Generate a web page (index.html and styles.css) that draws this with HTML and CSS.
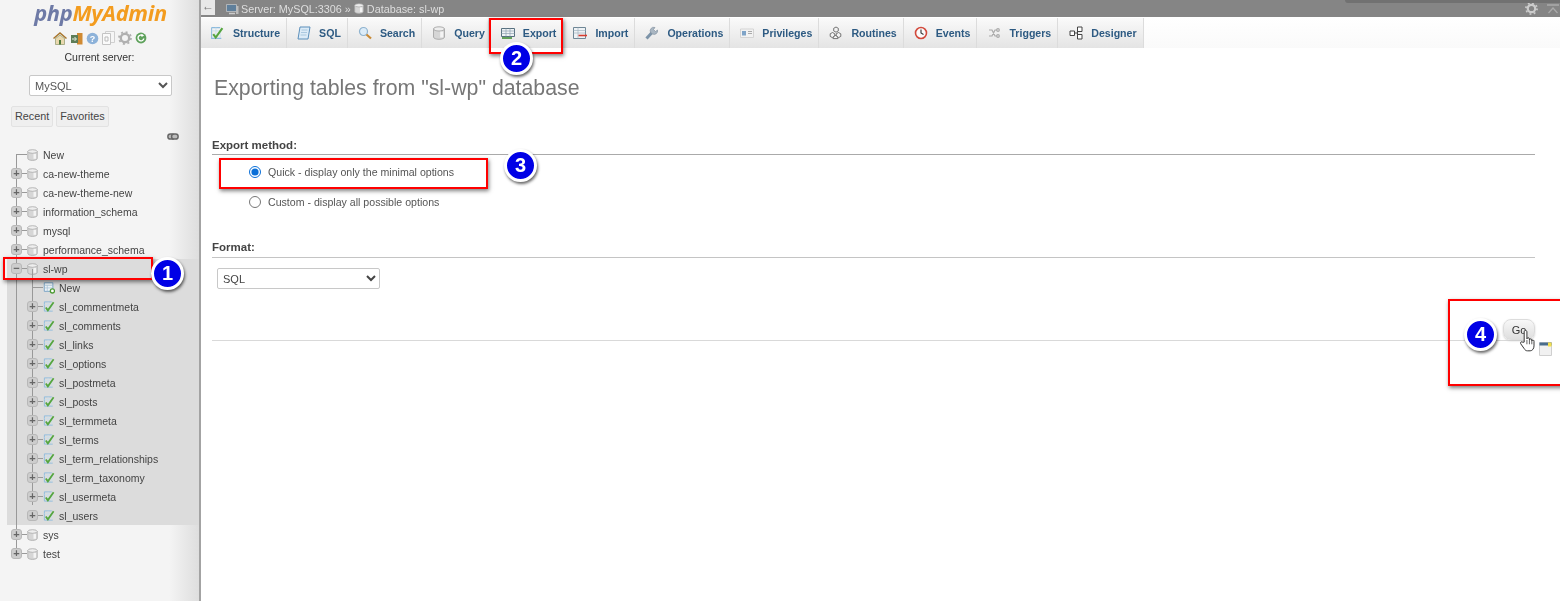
FILE: index.html
```html
<!DOCTYPE html>
<html lang="en">
<head>
    <meta charset="UTF-8">
    <title>phpMyAdmin - Export</title>
    <link rel="stylesheet" href="styles.css">
</head>
<body>
    <svg class="sprites" width="0" height="0">
        <symbol id="db" viewBox="0 0 11 12">
            <path d="M.8 2.500v7c0 1 2.100 1.900 4.700 1.900s4.700-.9 4.700-1.900v-7z" fill="#d6d6d6" stroke="#a8a8a8" stroke-width=".8"/>
            <ellipse cx="5.500" cy="2.500" rx="4.700" ry="1.800" fill="#eee" stroke="#a8a8a8" stroke-width=".8"/>
            <rect x="6.500" y="4.800" width="2.600" height="5" fill="#f4f4f4"/>
        </symbol>
        <symbol id="table" viewBox="0 0 13 13">
            <path d="M1.500 1.500h8M1.500 1.500v10h9" fill="none" stroke="#8dbbdd" stroke-width="1"/>
            <path d="M1.500 4.500h9M5.500 1.500v10M9.500 5v6" stroke="#c8deec" stroke-width=".8"/>
            <path d="M3 7.500l2.300 3.200L11.500 2" fill="none" stroke="#55a53f" stroke-width="1.900"/>
        </symbol>
        <symbol id="table-new" viewBox="0 0 14 14">
            <path d="M1.500 1.500h10v10h-10z" fill="#edf3f8" stroke="#6e9cc0"/>
            <path d="M1.500 4.500h10M1.500 7.500h10M5 4.500v7" stroke="#a4bfd4" stroke-width=".8"/>
            <circle cx="11" cy="11" r="2.400" fill="#fff" stroke="#4b9a32" stroke-width="1.500"/>
        </symbol>
        <symbol id="export" viewBox="0 0 14 14">
            <path d="M.5 2.500h13v8H.5z" fill="#eef2f5" stroke="#57707f"/>
            <path d="M.5 5h13M.5 7.500h13M5 2.500v8M9 2.500v8" stroke="#8fa4b1" stroke-width=".7"/>
            <path d="M1 12h10" stroke="#3f8f35" stroke-width="1.600"/>
        </symbol>
        <symbol id="import" viewBox="0 0 14 14">
            <path d="M.5 1.500h12v11H.5z" fill="#eef2f5" stroke="#6f8796"/>
            <path d="M.5 4.500h12M.5 7h12M5 1.500v11" stroke="#a4b6c1" stroke-width=".7"/>
            <path d="M14 9.500H5.500" stroke="#d63b2e" stroke-width="1.600"/>
        </symbol>
    </svg>

    <div class="app">
        <aside class="sidebar">
            <div class="logo"><span class="logo-php">php</span><span class="logo-admin">MyAdmin</span></div>
            <div class="quick-icons">
                <svg width="14" height="13" viewBox="0 0 14 13"><path d="M.5 6.500L7 1l6.500 5.500" fill="none" stroke="#a8752c" stroke-width="1.500"/><path d="M2.500 6.500v6h9v-6L7 3z" fill="#e9d8ae" stroke="#7c8a5a" stroke-width=".6"/><path d="M6 8h2v4.500H6z" fill="#4e7a3c"/></svg>
                <svg width="13" height="13" viewBox="0 0 13 13"><path d="M7 1h5.500v11.500H7z" fill="#d08a32"/><path d="M1 3h7v8H1z" fill="#5d7d57"/><path d="M2 7h4M4.500 5l2 2-2 2" fill="none" stroke="#e6efe2" stroke-width="1"/></svg>
                <svg width="13" height="13" viewBox="0 0 13 13"><circle cx="6.500" cy="6.500" r="5.800" fill="#8db2d9"/><text class="help-mark" x="6.500" y="9.500" text-anchor="middle">?</text></svg>
                <svg width="13" height="14" viewBox="0 0 13 14"><path d="M3.500.5h9v11h-9z" fill="#f6f6f6" stroke="#d0d0d0"/><path d="M.5 2.500h8v11h-8z" fill="#fafafa" stroke="#c4c4c4"/><path d="M3 6h3v4H3z" fill="none" stroke="#bbb"/></svg>
                <svg width="14" height="14" viewBox="0 0 14 14"><circle cx="7" cy="7" r="4.200" fill="none" stroke="#b0b0b0" stroke-width="2.400"/><circle cx="7" cy="7" r="6" fill="none" stroke="#b0b0b0" stroke-width="1.800" stroke-dasharray="2 2.700"/></svg>
                <svg width="12" height="12" viewBox="0 0 12 12"><circle cx="6" cy="6" r="5.400" fill="#5fa25c"/><path d="M8.800 6.500A2.900 2.900 0 1 1 7.600 3.600" fill="none" stroke="#fff" stroke-width="1.400"/><path d="M6.500 1.800l2.600 1.800-2.600 1.500z" fill="#fff"/></svg>
            </div>
            <div class="server-label">Current server:</div>
            <select class="server-select"><option>MySQL</option></select>
            <div class="side-tabs">
                <span class="side-tab">Recent</span>
                <span class="side-tab">Favorites</span>
            </div>
            <div class="link-row">
                <svg width="12" height="7" viewBox="0 0 12 7"><rect x=".9" y=".9" width="6.500" height="5.200" rx="2.400" fill="#bbb" stroke="#666" stroke-width="1.500"/><rect x="4.600" y=".9" width="6.500" height="5.200" rx="2.400" fill="#bbb" stroke="#666" stroke-width="1.500"/></svg>
            </div>

            <div class="tree">
                <div class="row"><span class="twig twig-new"></span><svg class="ico-db"><use href="#db"/></svg><span>New</span></div>
                <div class="row"><span class="exp">+</span><span class="twig"></span><svg class="ico-db"><use href="#db"/></svg><span>ca-new-theme</span></div>
                <div class="row"><span class="exp">+</span><span class="twig"></span><svg class="ico-db"><use href="#db"/></svg><span>ca-new-theme-new</span></div>
                <div class="row"><span class="exp">+</span><span class="twig"></span><svg class="ico-db"><use href="#db"/></svg><span>information_schema</span></div>
                <div class="row"><span class="exp">+</span><span class="twig"></span><svg class="ico-db"><use href="#db"/></svg><span>mysql</span></div>
                <div class="row"><span class="exp">+</span><span class="twig"></span><svg class="ico-db"><use href="#db"/></svg><span>performance_schema</span></div>

                <div class="open-group">
                    <div class="row row-open"><span class="exp">&minus;</span><span class="twig"></span><svg class="ico-db"><use href="#db"/></svg><span>sl-wp</span></div>
                    <div class="row row-table"><span class="twig twig-new"></span><svg class="ico-table"><use href="#table-new"/></svg><span>New</span></div>
                    <div class="row row-table"><span class="exp">+</span><span class="twig"></span><svg class="ico-table"><use href="#table"/></svg><span>sl_commentmeta</span></div>
                    <div class="row row-table"><span class="exp">+</span><span class="twig"></span><svg class="ico-table"><use href="#table"/></svg><span>sl_comments</span></div>
                    <div class="row row-table"><span class="exp">+</span><span class="twig"></span><svg class="ico-table"><use href="#table"/></svg><span>sl_links</span></div>
                    <div class="row row-table"><span class="exp">+</span><span class="twig"></span><svg class="ico-table"><use href="#table"/></svg><span>sl_options</span></div>
                    <div class="row row-table"><span class="exp">+</span><span class="twig"></span><svg class="ico-table"><use href="#table"/></svg><span>sl_postmeta</span></div>
                    <div class="row row-table"><span class="exp">+</span><span class="twig"></span><svg class="ico-table"><use href="#table"/></svg><span>sl_posts</span></div>
                    <div class="row row-table"><span class="exp">+</span><span class="twig"></span><svg class="ico-table"><use href="#table"/></svg><span>sl_termmeta</span></div>
                    <div class="row row-table"><span class="exp">+</span><span class="twig"></span><svg class="ico-table"><use href="#table"/></svg><span>sl_terms</span></div>
                    <div class="row row-table"><span class="exp">+</span><span class="twig"></span><svg class="ico-table"><use href="#table"/></svg><span>sl_term_relationships</span></div>
                    <div class="row row-table"><span class="exp">+</span><span class="twig"></span><svg class="ico-table"><use href="#table"/></svg><span>sl_term_taxonomy</span></div>
                    <div class="row row-table"><span class="exp">+</span><span class="twig"></span><svg class="ico-table"><use href="#table"/></svg><span>sl_usermeta</span></div>
                    <div class="row row-table"><span class="exp">+</span><span class="twig"></span><svg class="ico-table"><use href="#table"/></svg><span>sl_users</span></div>
                </div>

                <div class="row"><span class="exp">+</span><span class="twig"></span><svg class="ico-db"><use href="#db"/></svg><span>sys</span></div>
                <div class="row"><span class="exp">+</span><span class="twig"></span><svg class="ico-db"><use href="#db"/></svg><span>test</span></div>
            </div>
        </aside>

        <main class="main">
            <div class="topbar">
                <span class="back">&larr;</span>
                <svg class="crumb-icon" width="13" height="12" viewBox="0 0 13 12"><path d="M.5 1.500h10v7H.5z" fill="#5f7f9b" stroke="#ccc" stroke-width=".7"/><path d="M3 10.500h6" stroke="#ccc" stroke-width="1.500"/><path d="M10 3h2.500v8H10z" fill="#bbb"/></svg>
                <span class="crumb">Server: MySQL:3306</span>
                <span class="crumb crumb-sep">&raquo;</span>
                <svg class="crumb-db"><use href="#db"/></svg>
                <span class="crumb">Database: sl-wp</span>
                <div class="topbar-right">
                    <svg width="13" height="13" viewBox="0 0 14 14"><circle cx="7" cy="7" r="4" fill="none" stroke="#ccc" stroke-width="2.400"/><circle cx="7" cy="7" r="6" fill="none" stroke="#ccc" stroke-width="1.800" stroke-dasharray="2 2.700"/></svg>
                    <svg width="12" height="10" viewBox="0 0 12 10"><path d="M0 1h12M1.500 9L6 4l4.500 5" fill="none" stroke="#aaa" stroke-width="1.300"/></svg>
                </div>
            </div>

            <nav class="tabs">
                <a class="tab tab-first"><svg class="tab-icon"><use href="#table"/></svg>Structure</a>
                <a class="tab"><svg class="tab-icon" viewBox="0 0 14 14"><path d="M3 1h10l-2 12H1z" fill="#dcebf7" stroke="#5b8fbb"/><path d="M4.500 4h6M4 6.500h6M3.500 9h6" stroke="#9dbfd9" stroke-width=".8"/></svg>SQL</a>
                <a class="tab"><svg class="tab-icon" viewBox="0 0 14 14"><circle cx="5.500" cy="5.500" r="4" fill="#dcecf8" stroke="#8fb3cf" stroke-width="1.200"/><path d="M8.500 8.500l4.500 4" stroke="#c98a35" stroke-width="2.200"/></svg>Search</a>
                <a class="tab tab-query"><svg class="tab-icon"><use href="#db"/></svg>Query</a>
                <a class="tab tab-export"><svg class="tab-icon"><use href="#export"/></svg>Export</a>
                <a class="tab"><svg class="tab-icon"><use href="#import"/></svg>Import</a>
                <a class="tab"><svg class="tab-icon" viewBox="0 0 14 14"><path d="M1.500 12.500L7 6.500" stroke="#7c93a8" stroke-width="3"/><path d="M6 7a3.500 3.500 0 0 1 4-5.500L8.500 3.500l2 2L12.500 4A3.500 3.500 0 0 1 7.500 8z" fill="#a9b6c2" stroke="#7c8c9b" stroke-width=".6"/></svg>Operations</a>
                <a class="tab"><svg class="tab-icon" viewBox="0 0 14 14"><path d="M.5 3h13v8.500H.5z" fill="#f2f2f2" stroke="#d4d4d4"/><path d="M2 5h4v4.500H2z" fill="#7fa4c8"/><path d="M8 5.500h4M8 7.500h4" stroke="#aaa"/></svg>Privileges</a>
                <a class="tab"><svg class="tab-icon" viewBox="0 0 14 14"><g fill="#f2f2f2" stroke="#555" stroke-width=".8"><path d="M7 1l2.300 1.300v2.600L7 6.200 4.700 4.900V2.300z"/><path d="M3.500 6.500l2.300 1.300v2.600l-2.300 1.300-2.300-1.300V7.800z"/><path d="M9.500 6.500l2.300 1.300v2.600l-2.300 1.300-2.300-1.300V7.800z"/><path d="M6.500 9.500l2.300 1.300v1.800H4.200v-1.800z"/></g></svg>Routines</a>
                <a class="tab"><svg class="tab-icon" viewBox="0 0 14 14"><circle cx="7" cy="7" r="5.500" fill="#fbfbfb" stroke="#d24a3c" stroke-width="1.600"/><path d="M7 3.500V7l2.500 1.500" fill="none" stroke="#333" stroke-width="1.100"/></svg>Events</a>
                <a class="tab"><svg class="tab-icon" viewBox="0 0 14 14"><g fill="none" stroke="#aaa" stroke-width="1.200"><path d="M2 4h3l3 6h2M2 10h3l3-6h2"/><circle cx="11" cy="4" r="1.300"/><circle cx="11" cy="10" r="1.300"/></g></svg>Triggers</a>
                <a class="tab tab-last"><svg class="tab-icon" viewBox="0 0 14 14"><g fill="#fff" stroke="#444" stroke-width="1"><path d="M1 5h4.500v4.500H1z"/><path d="M8.500 1H13v4.500H8.500z"/><path d="M8.500 8.500H13V13H8.500z"/></g><path d="M5.500 7h3M8.500 3.500v7" stroke="#444" fill="none"/></svg>Designer</a>
            </nav>

            <div class="content">
                <h2 class="page-title">Exporting tables from "sl-wp" database</h2>

                <h3 class="section-title">Export method:</h3>
                <label class="option option-quick"><input type="radio" name="method" checked>Quick - display only the minimal options</label>
                <label class="option option-custom"><input type="radio" name="method">Custom - display all possible options</label>

                <h3 class="section-title section-format">Format:</h3>
                <select class="format-select"><option>SQL</option></select>

                <div class="actions">
                    <button class="go">Go</button>
                </div>
            </div>
        </main>
    </div>

    <!-- tutorial annotations drawn over the page -->
    <div class="mark mark-1"></div>
    <div class="mark mark-2"></div>
    <div class="mark mark-3"></div>
    <div class="mark mark-4"></div>
    <div class="badge badge-1">1</div>
    <div class="badge badge-2">2</div>
    <div class="badge badge-3">3</div>
    <div class="badge badge-4">4</div>

    <svg class="hand" width="18" height="24" viewBox="0 0 16 22"><path d="M4.500 12V2.500c0-1.600 2.500-1.600 2.500 0V9c0-1.300 2.300-1.300 2.300 0v1c0-1.200 2.200-1.200 2.200 0v1c0-1.100 2-1 2 .3v4.200c0 2.500-1.500 4.500-3.500 4.500H7.500c-1.500 0-2.300-.8-3-2L1.300 13.500c-.8-1.300 1-2.500 2-1.300z" fill="#fff" stroke="#333" stroke-width=".9"/><path d="M7 10v4M9.300 10v4M11.500 11v3" stroke="#333" stroke-width=".7"/></svg>
    <svg class="note" width="13" height="14" viewBox="0 0 13 14"><path d="M.5.500h12v13H.5z" fill="#f1f1f1" stroke="#cfcfcf"/><path d="M.5.500h12v3H.5z" fill="#4a6d8c"/><path d="M9 .5h3.500v4H9z" fill="#f4e04d"/></svg>
</body>
</html>
```

FILE: styles.css
```css
* {
    box-sizing: border-box;
}
html, body {
    height: 100%;
}
body {
    margin: 0;
    overflow: hidden;
    position: relative;
    font-family: "Liberation Sans", Arial, sans-serif;
    font-size: 10.5px;
    color: #444;
    background: #fff;
}
.sprites {
    position: absolute;
}
.app {
    display: flex;
    height: 100%;
    filter: blur(.35px); /* the capture is a little soft */
}

/* left navigation */
.sidebar {
    width: 201px;
    flex: none;
    border-right: 2px solid #a3a3a3;
    background: linear-gradient(to right, #f4f4f4 85%, #dedede);
}
.logo {
    height: 26px;
    padding-left: 2px;
    text-align: center;
    font-family: "Open Sans", "Liberation Sans", sans-serif;
    font-size: 21.800px;
    line-height: 26px;
    font-weight: 700;
    font-style: italic;
    letter-spacing: -.3px;
}
.logo-php {
    color: #6e7aa6;
}
.logo-admin {
    color: #f39c1f;
}
.quick-icons {
    display: flex;
    justify-content: center;
    align-items: center;
    gap: 3px;
    height: 16px;
    margin: 4px 0 0;
}
.help-mark {
    font: bold 9px "Liberation Sans", sans-serif;
    fill: #fff;
}
.server-label {
    height: 14px;
    margin-top: 4px;
    line-height: 14px;
    text-align: center;
    color: #333;
}
.server-select {
    display: block;
    width: 143px;
    height: 21px;
    margin: 11px 0 0 29px;
    font: 11px "Liberation Sans", sans-serif;
    color: #555;
    background: #fff;
    border: 1px solid #c8c8c8;
    border-radius: 2px;
    padding-left: 1px;
}
.side-tabs {
    display: flex;
    gap: 3px;
    margin: 10px 0 0 11px;
}
.side-tab {
    height: 21px;
    padding: 0 3px;
    font-size: 10.8px;
    line-height: 19px;
    color: #444;
    background: #efefef;
    border: 1px solid #e2e2e2;
    border-radius: 2px;
}
.link-row {
    display: flex;
    justify-content: flex-end;
    height: 18px;
    padding: 6px 20px 0 0;
}

/* database tree */
.tree {
    position: relative;
    margin-top: 0;
}
.tree::before {
    content: "";
    position: absolute;
    left: 16px;
    top: 10px;
    height: 398px;
    width: 1px;
    background: #999;
    z-index: 1;
}
.row {
    display: flex;
    align-items: center;
    height: 19px;
    padding-left: 11px;
    color: #444;
    white-space: nowrap;
}
.exp {
    position: relative;
    z-index: 2;
    width: 11px;
    height: 11px;
    flex: none;
    border-radius: 3px;
    background: #cdcdcd;
    border: 1px solid #b8b8b8;
    font: bold 11px/9px "Liberation Sans", sans-serif;
    text-align: center;
    color: #666;
}
.twig {
    width: 5px;
    height: 1px;
    flex: none;
    background: #999;
}
.twig-new {
    width: 11px;
    margin-left: 5px;
}
.ico-db {
    width: 11px;
    height: 12px;
    flex: none;
    margin-right: 5px;
}
.ico-table {
    width: 12px;
    height: 13px;
    flex: none;
    margin-right: 4px;
}
.open-group {
    position: relative;
    margin-left: 7px;
    background: #dcdcdc;
}
.open-group::before {
    content: "";
    position: absolute;
    left: 25px;
    top: 10px;
    height: 236px;
    width: 1px;
    background: #999;
}
.row-open {
    padding-left: 4px;
}
.row-table {
    position: relative;
    padding-left: 20px;
}

/* main column */
.main {
    flex: 1;
    min-width: 0;
    display: flex;
    flex-direction: column;
}
.topbar {
    position: relative;
    display: flex;
    align-items: center;
    height: 17px;
    font-size: 10.8px;
    background: #858585;
    color: #dedede;
}
.topbar::after {
    content: "";
    position: absolute;
    right: 0;
    top: 0;
    width: 215px;
    height: 3px;
    background: #717171;
    border-radius: 0 0 0 4px;
}
.back {
    width: 14px;
    height: 15px;
    margin: 0 11px 2px 0;
    background: #e8e8e8;
    color: #777;
    font-size: 12px;
    line-height: 13px;
    text-align: center;
}
.crumb-icon {
    margin-right: 2px;
}
.crumb-sep {
    margin: 0 3px;
}
.crumb-db {
    width: 10px;
    height: 11px;
    margin-right: 3px;
}
.topbar-right {
    display: flex;
    align-items: center;
    gap: 9px;
    margin-left: auto;
    padding-right: 1px;
    height: 100%;
}
.tabs {
    display: flex;
    height: 30px;
    margin-top: 1px;
    background: linear-gradient(#fff, #fafafa);
}
.tab {
    display: flex;
    align-items: center;
    padding: 0 6px 0 10px;
    border-right: 1px solid #dcdcdc;
    background: linear-gradient(#fafafa, #e4e4e4);
    font-size: 10.6px;
    font-weight: 700;
    color: #2d5a82;
}
.tab-first {
    padding-left: 9px;
}
.tab-first .tab-icon {
    margin-right: 9px;
}
.tab-query {
    padding-right: 3px;
}
.tab-export {
    padding-left: 12px;
    border-right-color: #e6e6e6;
}
.tab-last {
    padding-left: 11px;
}
.tab-icon {
    width: 14px;
    height: 14px;
    flex: none;
    margin-right: 8px;
}
.content {
    display: flex;
    flex-direction: column;
    padding: 0 25px 0 11px;
}
.page-title {
    margin: 27px 0 0 2px;
    font-size: 21.300px;
    line-height: 26px;
    font-weight: 400;
    color: #777;
}
.section-title {
    margin: 37px 0 0;
    height: 17px;
    border-bottom: 1px solid #aaa;
    font-size: 11.500px;
    line-height: 15px;
    font-weight: 700;
    color: #444;
}
.option {
    display: flex;
    align-items: center;
    height: 18px;
    padding-left: 37px;
    font-size: 10.6px;
    color: #555;
}
.option input {
    width: 12px;
    height: 12px;
    margin: 0 7px 0 0;
    accent-color: #0a6fd8;
}
.option-quick {
    margin-top: 8px;
}
.option-custom {
    margin-top: 12px;
}
.section-format {
    margin-top: 29px;
    height: 18px;
    border-bottom-color: #c4c4c4;
}
.format-select {
    width: 163px;
    height: 21px;
    margin: 10px 0 0 5px;
    font: 11px "Liberation Sans", sans-serif;
    color: #444;
    background: #fff;
    border: 1px solid #c8c8c8;
    border-radius: 2px;
    padding-left: 1px;
}
.actions {
    display: flex;
    justify-content: flex-end;
    height: 21px;
    margin-top: 30px;
    box-sizing: content-box;
    border-bottom: 1px solid #d9d9d9;
}
.go {
    width: 32px;
    height: 21px;
    padding: 0;
    font: 11px "Liberation Sans", sans-serif;
    color: #333;
    background: linear-gradient(#f8f8f8, #dedede);
    border: 1px solid #dcdcdc;
    border-radius: 8px;
    box-shadow: 0 1px 2px #ccc;
}

/* annotations */
.mark {
    position: absolute;
    border: 2px solid #f00;
    box-shadow: 1px 2px 4px rgba(0, 0, 0, .5);
}
.mark-1 {
    left: 3px;
    top: 257px;
    width: 150px;
    height: 23px;
}
.mark-2 {
    left: 489px;
    top: 18px;
    width: 74px;
    height: 36px;
}
.mark-3 {
    left: 219px;
    top: 158px;
    width: 269px;
    height: 31px;
}
.mark-4 {
    left: 1448px;
    top: 299px;
    width: 120px;
    height: 87px;
}
.badge {
    position: absolute;
    width: 33px;
    height: 33px;
    border-radius: 50%;
    border: 3px solid #fff;
    background: #0000e6;
    box-shadow: 1px 2px 3px rgba(0, 0, 0, .6);
    color: #fff;
    font: 700 20px/27px "Liberation Sans", sans-serif;
    text-align: center;
}
.badge-1 {
    left: 151px;
    top: 257px;
}
.badge-2 {
    left: 500px;
    top: 42px;
}
.badge-3 {
    left: 504px;
    top: 149px;
}
.badge-4 {
    left: 1464px;
    top: 318px;
}
.hand {
    position: absolute;
    left: 1519px;
    top: 329px;
}
.note {
    position: absolute;
    left: 1539px;
    top: 342px;
}
```
